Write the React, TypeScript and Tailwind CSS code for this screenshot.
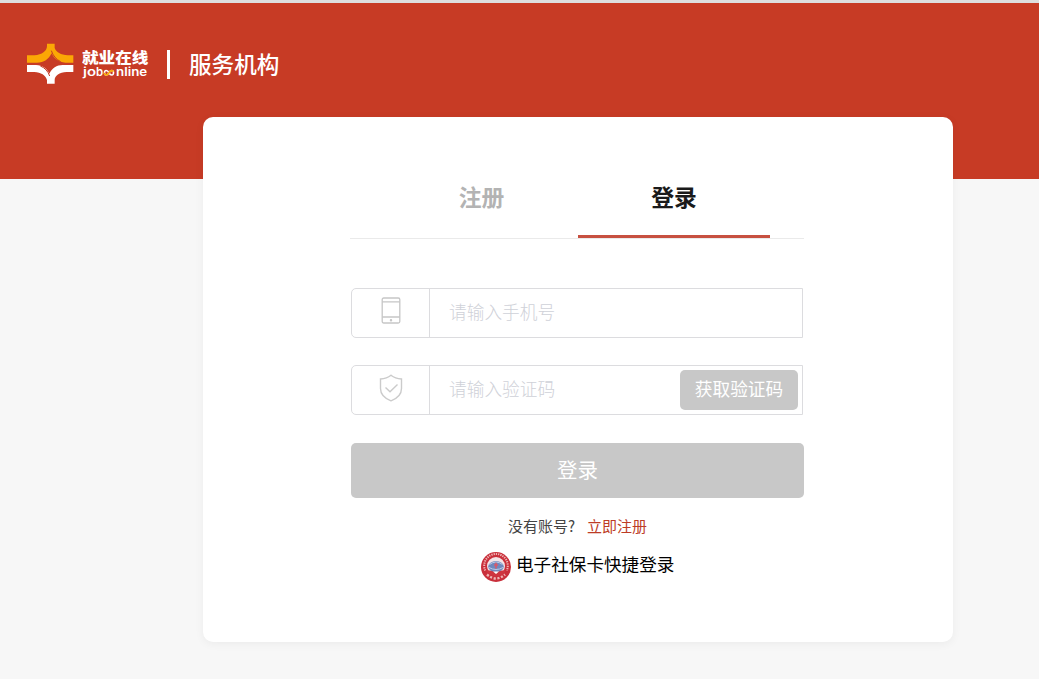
import React from "react";

function Logo() {
  return (
    <svg className="mt-[7px] h-[41px] w-[47px] shrink-0" viewBox="35 25 141 123">
      <path
        fill="#fba705"
        d="M95 27H118V40C122 52 137 61 157 62H174V84H150C131 83 116 72 109 56C100 74 86 84 65 84H35V62H57C80 60 95 49 95 34Z"
      />
      <path d="M108 48C113 63 122 74 136 81" fill="none" stroke="#c73b25" strokeWidth="3" />
      <path
        fill="#fff"
        d="M35 91H62C82 92 95 102 102 117C110 101 124 91 142 91H174V112H154C132 113 118 123 118 136V147H95V136C91 122 77 113 57 112H35Z"
      />
      <path d="M75 94C88 99 98 109 103 124" fill="none" stroke="#c73b25" strokeWidth="3" />
    </svg>
  );
}

function Wordmark() {
  return (
    <div className="ml-2 mt-3 w-[68px] whitespace-nowrap">
      <div className="h-[18px] scale-y-[0.88] text-[16.6px] font-black leading-[18px]">就业在线</div>
      <div className="flex h-[13px] items-center pl-px font-['Inter',sans-serif] text-[11.5px] font-semibold leading-[13px]">
        <span className="w-[13px]">
          <span className="inline-block origin-left scale-x-[1.3]">jo</span>
        </span>
        <span className="w-[7px]">b</span>
        <svg className="h-[7px] w-[12px] shrink-0" viewBox="0 0 11 7">
          <path
            d="M1 3.8C1 0.5 4 1 5.5 3.8S10 6.8 10 3.8S7 0.8 5.5 3.8S1 6.8 1 3.8"
            fill="none"
            stroke="#fff"
            strokeWidth="1.6"
          />
          <path d="M1 3.8C1 6.8 4 6.5 5.5 3.8S9 1 9.8 2.6" fill="none" stroke="#fba705" strokeWidth="1.7" />
        </svg>
        <span className="ml-px inline-block origin-left scale-x-[1.16]">nline</span>
      </div>
    </div>
  );
}

function PhoneIcon() {
  return (
    <svg className="-mt-[5px] h-7 w-5" viewBox="0 0 20 28" fill="none" stroke="#c6c6c6" strokeWidth="1.3">
      <rect x="1.2" y="1" width="17.6" height="25" rx="1.5" />
      <path d="M1.2 4.8H18.8M1.2 20H18.8" />
      <circle cx="10" cy="23.2" r="0.6" fill="#c6c6c6" />
    </svg>
  );
}

function ShieldIcon() {
  return (
    <svg className="-mt-1 h-7 w-6" viewBox="0 0 24 28" fill="none" stroke="#cbcbcb" strokeWidth="1.4">
      <path d="M12 1.2C9 3.7 5.5 4.8 1.5 5V14.5C1.5 20.5 6 24.5 12 26.8C18 24.5 22.5 20.5 22.5 14.5V5C18.5 4.8 15 3.7 12 1.2Z" />
      <path d="M6.5 13.5L11 17.8L18.5 10.5" />
    </svg>
  );
}

function CardBadge() {
  return (
    <svg className="h-8 w-8" viewBox="0 0 32 32">
      <circle cx="16" cy="16" r="15" fill="#c92f3b" />
      <path d="M5.2 19.5A11.8 11.8 0 1 1 26.8 19.5" fill="none" stroke="#efb6b6" strokeWidth="2" strokeDasharray="1.3 1" />
      <path d="M7 23.5Q16 31.5 25 23.5" fill="none" stroke="#efb6b6" strokeWidth="2.4" strokeDasharray="2.2 1.6" />
      <circle cx="16" cy="15" r="9" fill="#f4e3e6" />
      <path d="M6 19.5H26C23.5 24 19.5 25.5 16 25.5C12 25.5 8.5 24 6 19.5Z" fill="#cf3540" />
      <ellipse cx="16" cy="15.5" rx="7.8" ry="5.4" fill="#7088bd" />
      <path d="M9.5 13.5Q16 8.5 22.5 13.5M9 16.5Q16 20.5 23 16.5" fill="none" stroke="#b9cbe8" strokeWidth="1" />
      <path d="M16 11.8V17.5M14 14H18" stroke="#d9596a" strokeWidth="1.6" />
      <path d="M13 20.5H19L16 23Z" fill="#fff" />
    </svg>
  );
}

export default function App() {
  return (
    <div className="h-[679px] w-full overflow-hidden bg-[#f7f7f7] font-['Noto_Sans_CJK_SC',sans-serif]">
      <header className="flex h-[179px] items-start border-t-[3px] border-[#dedede] bg-[#c73b25] pl-[27px] pt-[33px] text-white">
        <Logo />
        <Wordmark />
        <div className="ml-[17px] mt-[14px] h-[29px] w-[3px] bg-white" />
        <div className="ml-[19px] mt-[11px] text-[22.6px] font-medium leading-[34px]">服务机构</div>
      </header>
      <main className="relative ml-[203px] -mt-[62px] h-[525px] w-[750px] rounded-[10px] bg-white pl-[148px] pt-[50px] shadow-[0_2px_10px_rgba(0,0,0,0.05)]">
        <div className="-ml-px flex h-[72px] w-[454px] border-b border-[#eaeaea] pl-9 text-[22.8px] font-bold">
          <div className="h-[71px] w-48 pr-px pt-[13px] text-center leading-[34px] text-[#b3b3b3]">注册</div>
          <div className="h-[71px] w-48 border-b-[3px] border-[#c75040] pt-[13px] text-center leading-[34px] text-[#1a1a1a]">登录</div>
        </div>
        <div className="mt-[49px] flex h-[50px] w-[452px] rounded-l-[5px] border border-[#dcdcdf]">
          <div className="flex w-[78px] items-center justify-center border-r border-[#dcdcdf]">
            <PhoneIcon />
          </div>
          <div className="pl-[19px] text-[17.7px] font-light leading-[44px] text-[#cfd1d8]">请输入手机号</div>
        </div>
        <div className="mt-[27px] flex h-[50px] w-[452px] rounded-l-[5px] border border-[#dcdcdf]">
          <div className="flex w-[78px] items-center justify-center border-r border-[#dcdcdf]">
            <ShieldIcon />
          </div>
          <div className="flex-1 pl-[19px] text-[17.7px] font-light leading-[44px] text-[#cfd1d8]">请输入验证码</div>
          <button className="mr-1 mt-1 h-10 w-[118px] rounded-[5px] bg-[#c8c8c8] pb-1 text-[17.7px] leading-9 text-white">获取验证码</button>
        </div>
        <button className="mt-7 block h-[55px] w-[453px] rounded-[5px] bg-[#c8c8c8] pb-[3px] text-[20.5px] leading-[52px] text-white">登录</button>
        <div className="mt-[17px] flex w-[453px] pl-[157px] text-[15px] leading-[22px] text-[#444]">
          <span className="w-[79px] whitespace-nowrap">没有账号?</span>
          <span className="text-[#bd3c26]">立即注册</span>
        </div>
        <div className="mt-[14px] flex w-[453px] items-center pl-[129px] text-[17.6px] leading-8 text-black">
          <CardBadge />
          <span className="-mt-1.5 ml-1 whitespace-nowrap">电子社保卡快捷登录</span>
        </div>
      </main>
    </div>
  );
}
